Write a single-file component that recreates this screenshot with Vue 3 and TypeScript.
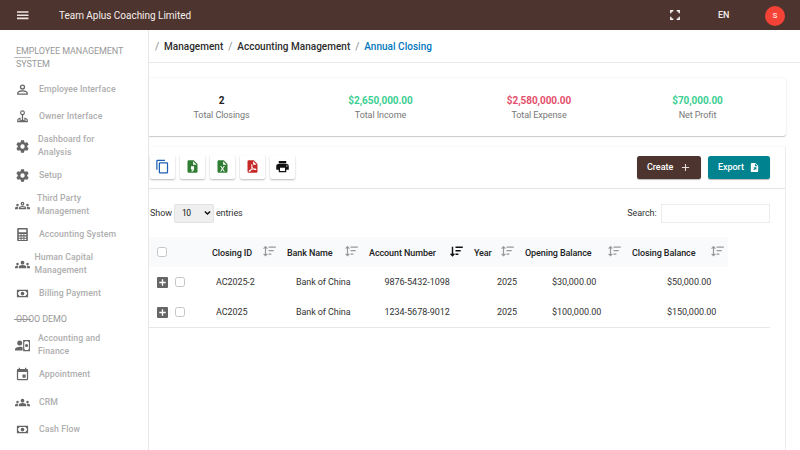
<script setup lang="ts">
interface NavItem { label: string; icon: string; indent: number }
interface Row { id: string; bank: string; account: string; year: string; opening: string; closing: string }

const icons: Record<string, string> = {
  person: 'M12 3.800a4.200 4.200 0 1 1 0 8.400a4.200 4.200 0 0 1 0-8.400m0 2.100a2.100 2.100 0 1 0 0 4.200a2.100 2.100 0 0 0 0-4.200M12 13c2.700 0 8.500 1.300 8.500 4v3.500h-17V17c0-2.700 5.800-4 8.500-4m0 2.100c-3 0-6.300 1.260-6.300 1.900v1.300h12.600V17c0-.64-3.330-1.900-6.300-1.900Z',
  owner: 'M12 2a4 4 0 0 1 1 7.850V17l2 1.500v-5C18 14.200 20.500 15.500 20.500 17.500V21h-17v-3.500C3.500 15.500 6 14.200 9 13.500v5L11 17V9.850A4 4 0 0 1 12 2m0 1.900a2.100 2.100 0 1 0 0 4.200a2.100 2.100 0 0 0 0-4.200M7.200 16.100c-1.200.5-1.800 1-1.800 1.500v1.500h1.800Zm9.600 0v3h1.800v-1.500c0-.5-.6-1-1.800-1.500Z',
  cog: 'M12 15.500A3.500 3.500 0 0 1 8.500 12A3.500 3.500 0 0 1 12 8.500a3.500 3.500 0 0 1 3.500 3.500a3.500 3.500 0 0 1-3.500 3.500m7.430-2.530c.04-.32.07-.64.07-.97s-.03-.66-.07-1l2.110-1.630c.19-.15.24-.42.12-.64l-2-3.460c-.12-.22-.39-.31-.61-.22l-2.490 1c-.52-.39-1.060-.73-1.690-.98l-.37-2.650A.506.506 0 0 0 14 2h-4c-.25 0-.46.18-.5.42l-.37 2.650c-.63.25-1.170.59-1.690.98l-2.490-1c-.22-.09-.49 0-.61.22l-2 3.460c-.13.22-.07.49.12.64L4.570 11c-.04.34-.07.67-.07 1s.03.65.07.97l-2.110 1.660c-.19.15-.25.42-.12.64l2 3.460c.12.22.39.3.61.22l2.490-1.010c.52.4 1.060.74 1.690.99l.37 2.650c.04.24.25.42.5.42h4c.25 0 .46-.18.5-.42l.37-2.650c.63-.26 1.170-.59 1.690-.99l2.490 1.010c.22.08.49 0 .61-.22l2-3.460c.12-.22.07-.49-.12-.64Z',
  groupOutline: 'M4 13a2 2 0 1 0 0-4a2 2 0 0 0 0 4m1.130 1.100A7 7 0 0 0 4 14c-.99 0-1.930.21-2.780.58A2.010 2.010 0 0 0 0 16.430V18h4.500v-1.610c0-.83.23-1.610.63-2.290M20 13a2 2 0 1 0 0-4a2 2 0 0 0 0 4m4 3.430c0-.81-.48-1.530-1.220-1.850A6.950 6.950 0 0 0 20 14c-.39 0-.76.04-1.130.1c.4.680.630 1.460.630 2.290V18H24zm-7.760-2.780A10.500 10.500 0 0 0 12 12.750c-1.630 0-3.070.39-4.240.9A2.990 2.990 0 0 0 6 16.390V18h12v-1.610c0-1.180-.68-2.260-1.760-2.740M8.070 16c.09-.23.13-.39.91-.69a8.300 8.300 0 0 1 6.040 0c.77.3.81.46.91.690zM12 8a1 1 0 1 1 0 2a1 1 0 0 1 0-2m0-2a3 3 0 1 0 0 6a3 3 0 0 0 0-6',
  group: 'M12 12.750c1.630 0 3.070.39 4.240.9c1.080.48 1.760 1.560 1.760 2.730V18H6v-1.610c0-1.180.68-2.260 1.760-2.730c1.170-.52 2.610-.91 4.240-.91M4 13a2 2 0 1 0 0-4a2 2 0 0 0 0 4m1.130 1.100A7 7 0 0 0 4 14c-.99 0-1.930.21-2.780.58A2.010 2.010 0 0 0 0 16.430V18h4.500v-1.610c0-.83.23-1.610.63-2.290M20 13a2 2 0 1 0 0-4a2 2 0 0 0 0 4m4 3.430c0-.81-.48-1.530-1.220-1.850A6.950 6.950 0 0 0 20 14c-.39 0-.76.04-1.130.1c.4.680.630 1.460.630 2.290V18H24zM12 6a3 3 0 1 1 0 6a3 3 0 0 1 0-6',
  calculator: 'M5 1.500h14A1.500 1.500 0 0 1 20.500 3v18a1.500 1.500 0 0 1-1.500 1.500H5A1.500 1.500 0 0 1 3.500 21V3A1.500 1.500 0 0 1 5 1.500M6 4v4.500h12V4Zm0 7v2h3v-2Zm4.500 0v2h3v-2ZM15 11v2h3v-2Zm-9 4v2h3v-2Zm4.500 0v2h3v-2Zm4.500 0v2h3v-2Zm-9 3.700v2h3v-2Zm4.500 0v2h3v-2Zm4.500 0v2h3v-2Z',
  cash: 'M3 6h18v12H3zm9 3a3 3 0 1 1 0 6a3 3 0 0 1 0-6M7 8a2 2 0 0 1-2 2v4a2 2 0 0 1 2 2h10a2 2 0 0 1 2-2v-4a2 2 0 0 1-2-2z',
  accountCash: 'M7.500 4a4 4 0 1 1 0 8a4 4 0 0 1 0-8M8 14c1.500 0 3 .2 4.200.6V20H0v-2c0-2.500 4-4 8-4M13 3h11v18H13Zm3 2a1.500 1.500 0 0 1-1.200 1.500v11A1.500 1.500 0 0 1 16 19h5a1.500 1.500 0 0 1 1.200-1.500v-11A1.500 1.500 0 0 1 21 5Zm2.500 4.500a2.500 2.500 0 1 1 0 5a2.500 2.500 0 0 1 0-5',
  calendar: 'M19 19H5V8h14m-3-7v2H8V1H6v2H5c-1.110 0-2 .89-2 2v14a2 2 0 0 0 2 2h14a2 2 0 0 0 2-2V5a2 2 0 0 0-2-2h-1V1m-1 11h-5v5h5z',
  copy: 'M19 21H8V7h11m0-2H8a2 2 0 0 0-2 2v14a2 2 0 0 0 2 2h11a2 2 0 0 0 2-2V7a2 2 0 0 0-2-2m-3-4H4a2 2 0 0 0-2 2v14h2V3h12z',
  csv: 'M14 2H6a2 2 0 0 0-2 2v16a2 2 0 0 0 2 2h12a2 2 0 0 0 2-2V8zm-1 1.500L18.500 9H13ZM9.500 11.500h5V16c0 2.200-1.700 4-4 4.300v-1.600c1-.3 1.700-1 1.800-1.900H9.500Z',
  excel: 'M14 2H6a2 2 0 0 0-2 2v16a2 2 0 0 0 2 2h12a2 2 0 0 0 2-2V8zm1.800 18H14l-2-3.400l-2 3.400H8.200l2.900-4.500L8.200 11H10l2 3.400l2-3.400h1.800l-2.900 4.500zM13 9V3.500L18.500 9z',
  pdf: 'M14 2H6a2 2 0 0 0-2 2v16a2 2 0 0 0 2 2h12a2 2 0 0 0 2-2V8zm-1 1.500L18.500 9H13ZM10.500 8.500c1.500 0 1.700 2 1.200 4c.6 1.300 1.400 2.200 2.500 2.900c2.200-.3 4 .1 4 1.300c0 1.500-2.500 1.300-4.400.1c-1.500.2-2.700.5-4 1c-1.200 2-2.500 3.200-3.500 2.500c-1-.8.3-2.500 2.500-3.500c.8-1.500 1.400-2.900 1.700-4.300c-.8-2-1-4 0-4m.3 6c-.4 1-.7 1.600-.9 2.100l2.500-.6Z',
  printer: 'M18 3H6v4h12m1 5a1 1 0 1 1 0-2a1 1 0 0 1 0 2m-3 7H8v-5h8m3-6H5a3 3 0 0 0-3 3v6h4v4h12v-4h4v-6a3 3 0 0 0-3-3',
  exportFile: 'M14 2H6a2 2 0 0 0-2 2v16a2 2 0 0 0 2 2h12a2 2 0 0 0 2-2V8zm-1 1.500L18.500 9H13ZM10 11.500h6v6l-2-2L11.500 18l-2-2l2.500-2.500Z',
}

const mainNav: NavItem[] = [
  { label: 'Employee Interface', icon: 'person', indent: 0 },
  { label: 'Owner Interface', icon: 'owner', indent: 0 },
  { label: 'Dashboard for\nAnalysis', icon: 'cog', indent: 1 },
  { label: 'Setup', icon: 'cog', indent: 0 },
  { label: 'Third Party\nManagement', icon: 'groupOutline', indent: 2 },
  { label: 'Accounting System', icon: 'calculator', indent: 0 },
  { label: 'Human Capital\nManagement', icon: 'group', indent: 4 },
  { label: 'Billing Payment', icon: 'cash', indent: 0 },
]
const demoNav: NavItem[] = [
  { label: 'Accounting and\nFinance', icon: 'accountCash', indent: 1 },
  { label: 'Appointment', icon: 'calendar', indent: 0 },
  { label: 'CRM', icon: 'group', indent: 0 },
  { label: 'Cash Flow', icon: 'cash', indent: 0 },
]
const stats = [
  { value: '2', label: 'Total Closings', tone: 'dark' },
  { value: '$2,650,000.00', label: 'Total Income', tone: 'green' },
  { value: '$2,580,000.00', label: 'Total Expense', tone: 'red' },
  { value: '$70,000.00', label: 'Net Profit', tone: 'green' },
]
const tools = [
  { icon: 'copy', tone: 'blue' },
  { icon: 'csv', tone: 'leaf' },
  { icon: 'excel', tone: 'leaf' },
  { icon: 'pdf', tone: 'crimson' },
  { icon: 'printer', tone: 'black' },
]
const columns = ['Closing ID', 'Bank Name', 'Account Number', 'Year', 'Opening Balance', 'Closing Balance']
const rows: Row[] = [
  { id: 'AC2025-2', bank: 'Bank of China', account: '9876-5432-1098', year: '2025', opening: '$30,000.00', closing: '$50,000.00' },
  { id: 'AC2025', bank: 'Bank of China', account: '1234-5678-9012', year: '2025', opening: '$100,000.00', closing: '$150,000.00' },
]
</script>

<template>
  <div class="app">
    <header class="topbar">
      <svg class="burger" viewBox="0 0 12 9"><path d="M0 .2h11.500v1.600H0zM0 3.400h11.500V5H0zM0 6.600h11.500v1.600H0z" /></svg>
      <span class="company">Team Aplus Coaching Limited</span>
      <svg class="full" viewBox="0 0 10 10"><path d="M.8 3.300V.8h2.500M6.700.8h2.500v2.500M9.200 6.700v2.500H6.700M3.300 9.200H.8V6.700" /></svg>
      <span class="lang">EN</span>
      <span class="avatar">S</span>
    </header>
    <div class="body">
      <aside class="sidebar">
        <h2 class="section first">EMPLOYEE MANAGEMENT<br />SYSTEM</h2>
        <a v-for="n in mainNav" :key="n.label" class="nav" :class="[{ tall: n.label.includes('\n') }, 'shift' + n.indent]">
          <svg viewBox="0 0 24 24"><path :d="icons[n.icon]" fill-rule="evenodd" /></svg>
          <span>{{ n.label }}</span>
        </a>
        <h2 class="section second">ODOO DEMO</h2>
        <a v-for="n in demoNav" :key="n.label" class="nav" :class="[{ tall: n.label.includes('\n') }, 'shift' + n.indent]">
          <svg viewBox="0 0 24 24"><path :d="icons[n.icon]" fill-rule="evenodd" /></svg>
          <span>{{ n.label }}</span>
        </a>
      </aside>
      <main class="main">
        <nav class="crumbs">
          <i>/</i><b>Management</b><i>/</i><b>Accounting Management</b><i>/</i><b class="current">Annual Closing</b>
        </nav>
        <section class="stats">
          <div v-for="s in stats" :key="s.label" class="stat">
            <strong :class="s.tone">{{ s.value }}</strong>
            <span>{{ s.label }}</span>
          </div>
        </section>
        <section class="panel">
          <div class="toolbar">
            <button v-for="t in tools" :key="t.icon" class="tool" :class="t.tone">
              <svg viewBox="0 0 24 24"><path :d="icons[t.icon]" fill-rule="evenodd" /></svg>
            </button>
            <button class="action create">Create<svg viewBox="0 0 10 10"><path d="M4.400 1h1.200v3.400H9v1.200H5.600V9H4.400V5.600H1V4.400h3.400z" /></svg></button>
            <button class="action export">Export<svg viewBox="0 0 24 24"><path :d="icons.exportFile" fill-rule="evenodd" /></svg></button>
          </div>
          <div class="filter">
            <span class="show">Show</span>
            <span class="select">10<svg viewBox="0 0 8 6"><path d="M1 1.200l3 3l3-3" /></svg></span>
            <span class="entries">entries</span>
            <span class="search">Search:</span>
            <input class="query" type="text" />
          </div>
          <div class="table">
            <div class="thead">
              <span class="cell"><i class="check" /></span>
              <span v-for="(c, i) in columns" :key="c" class="cell head">
                {{ c }}
                <svg class="sort" :class="{ active: i === 2 }" viewBox="0 0 13 11">
                  <path d="M5.500 1.200h7.300M5.500 4.700h5.200M5.500 8.200h2.900M2.500 .8v8.700M.6 7.800l1.900 1.900l1.900-1.900" />
                  <path v-if="i !== 2" d="M.6 2.600l1.900-1.900l1.900 1.900" />
                </svg>
              </span>
            </div>
            <div v-for="r in rows" :key="r.id" class="row">
              <span class="cell picks">
                <svg class="plus" viewBox="0 0 11 11"><rect width="11" height="11" rx="1" /><path d="M5.500 2.300v6.400M2.300 5.500h6.400" /></svg>
                <i class="check" />
              </span>
              <span class="cell">{{ r.id }}</span>
              <span class="cell">{{ r.bank }}</span>
              <span class="cell num">{{ r.account }}</span>
              <span class="cell num">{{ r.year }}</span>
              <span class="cell num">{{ r.opening }}</span>
              <span class="cell num">{{ r.closing }}</span>
            </div>
          </div>
        </section>
      </main>
    </div>
  </div>
</template>

<style>
body { margin: 0; background: #fff; overflow: hidden; }
</style>
<style scoped>
* { box-sizing: border-box; }
.app { width: 800px; height: 450px; overflow: hidden; font-family: Roboto, sans-serif; font-size: 9px; color: #333; display: flex; flex-direction: column; }
.topbar { height: 30px; flex: none; background: #4e342e; color: #f6eeec; display: flex; align-items: center; }
.burger { width: 12px; height: 9px; margin: 1px 0 0 17px; fill: #eee5e2; }
.company { margin-left: 30px; font-size: 10px; letter-spacing: -.03px; }
.full { width: 10px; height: 10px; margin-left: auto; fill: none; stroke: #fff; stroke-width: 1.400; }
.lang { width: 12px; margin-left: 38px; font-weight: 500; font-size: 9px; letter-spacing: -.1px; white-space: nowrap; }
.avatar { width: 20px; height: 20px; margin: 1px 15px 0 35px; border-radius: 50%; background: #f44336; display: grid; place-items: center; font-size: 8px; font-weight: 500; color: #ffe6e3; }
.body { flex: 1; display: flex; min-height: 0; }
.sidebar { width: 149px; flex: none; border-right: 1px solid #e7e7e7; overflow: hidden; color: #aeaeae; }
.section { margin: 0; font-size: 9px; font-weight: 400; line-height: 13px; padding-left: 16px; position: relative; letter-spacing: -.1px; color: #999; }
.first { height: 45.400px; padding-top: 15px; }
.second { height: 22.100px; padding-top: 6px; }
.section::before { content: ""; position: absolute; left: 14px; width: 17px; height: 1px; background: #bbb; }
.first::before { top: 27px; }
.second::before { top: 12px; background: #999; }
.nav { height: 27.500px; display: flex; align-items: center; padding-left: 15px; font-weight: 500; font-size: 8.700px; letter-spacing: .09px; }
.nav.tall { height: 31.500px; }
.nav svg { width: 15px; height: 15px; fill: #666; flex: none; }
.nav span { margin-left: 9px; white-space: pre-line; line-height: 13px; }
.nav.tall span { margin-top: -1px; }
.nav.shift1 span { margin-left: 8px; }
.nav.shift2 span { margin-left: 7px; }
.nav.shift4 span { margin-left: 4.500px; }
.main { flex: 1; min-width: 0; display: flex; flex-direction: column; }
.crumbs { height: 33px; flex: none; border-bottom: 1px solid #e8e8e8; display: flex; align-items: center; font-size: 10px; letter-spacing: .02px; gap: 5px; padding: 0 0 0 6px; }
.crumbs i { font-style: normal; color: #888; width: 4px; }
.crumbs b { font-weight: 500; color: #2c2c2c; }
.crumbs b.current { color: #0277bd; }
.stats { width: 637px; height: 58px; flex: none; margin-top: 14.500px; padding-top: 16px; display: grid; grid-template-columns: 145px 173px 144px 173px; border-radius: 0 3px 3px 0; box-shadow: 0 1px 1px #c9c9c9, 0 0 2px #e8e8e8; }
.stat { display: flex; flex-direction: column; align-items: center; line-height: 14px; color: #777; letter-spacing: -.07px; }
.stat strong { font-size: 10px; font-weight: 700; }
.dark { color: #222; } .green { color: #3bcf93; } .red { color: #e3506d; }
.panel { width: 637px; flex: 1; margin-top: 10.500px; border-right: 1px solid #ececec; border-top: 1px solid #fafafa; }
.toolbar { height: 42px; display: flex; align-items: center; padding: 0 15px 0 1px; gap: 5px; border-bottom: 1px solid #e4e4e4; }
button { font-family: inherit; border: 0; padding: 0; }
.tool { width: 25px; height: 24px; background: #fff; border-radius: 2px; box-shadow: 0 1px 2px #bbb; display: grid; place-items: center; margin-top: -2px; }
.tool svg { width: 15px; height: 15px; }
.blue { fill: #1c5fb4; } .leaf { fill: #2e7d32; } .crimson { fill: #c62828; } .black { fill: #111; }
.action { height: 23px; margin-top: -1px; border-radius: 2.500px; color: #fff; font-size: 9px; font-weight: 500; letter-spacing: -.05px; display: flex; align-items: center; justify-content: space-between; padding: 0 10px; box-shadow: 0 1px 1px #bbb; }
.create { width: 63.500px; margin-left: auto; background: #4e342e; padding-right: 11px; }
.create svg { width: 9px; height: 9px; fill: #e6dcda; }
.export { width: 62px; margin-left: 2.500px; background: #00838f; }
.export svg { width: 11px; height: 11px; fill: #fff; }
.filter { height: 48px; display: flex; align-items: center; padding: 0 15px 0 1px; letter-spacing: -.08px; }
.select { width: 40px; height: 19px; margin: 0 2px; background: #efefef; border: 1px solid #e2e2e2; border-radius: 2px; font-size: 8.500px; display: flex; align-items: center; justify-content: space-between; padding: 0 2px 0 7px; color: #111; letter-spacing: -.4px; }
.select svg { width: 7px; height: 6px; fill: none; stroke: #111; stroke-width: 1.700; }
.search { margin-left: auto; }
.query { width: 109px; height: 19px; margin-left: 4.500px; border: 1px solid #ececec; padding: 0; }
.table { width: 621px; border-bottom: 1px solid #e8e8e8; color: #333; letter-spacing: -.09px; }
.thead { width: 579px; height: 30px; background: #f8fafc; display: grid; grid-template-columns: 63px 75px 82px 105px 51px 107px 96px; align-items: center; }
.row { height: 30px; display: grid; grid-template-columns: 67px 80px 88.500px 112.500px 55px 115px 1fr; align-items: center; }
.cell { display: flex; align-items: center; white-space: nowrap; }
.num { letter-spacing: -.03px; }
.head { font-weight: 500; color: #222; justify-content: space-between; padding: 1px 11px 0 0; }
.head:last-child { padding-right: 4px; }
.sort { width: 13px; height: 11px; margin: -2px 0 0; fill: none; stroke: #999; stroke-width: 1.200; }
.sort.active { stroke: #111; stroke-width: 1.400; }
.check { width: 10px; height: 10px; border: 1px solid #c6c6c6; border-radius: 2.500px; background: #fff; }
.thead .check { margin-left: 8px; }
.picks { padding-left: 8px; gap: 7px; }
.plus { width: 11px; height: 11px; fill: #666; stroke: #fff; stroke-width: 1.300; }
.plus rect { stroke: none; }
</style>
